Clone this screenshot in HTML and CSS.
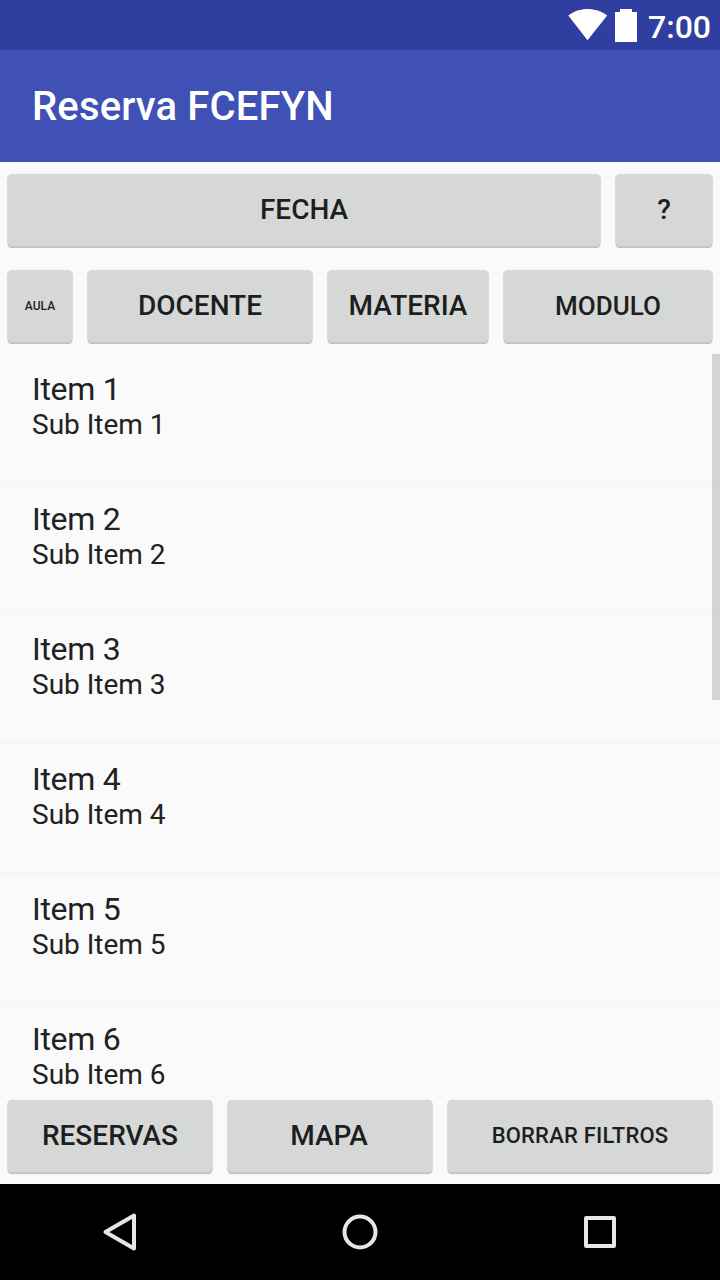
FILE: index.html
```html
<!DOCTYPE html>
<html lang="es">
<head>
<meta charset="utf-8">
<title>Reserva FCEFYN</title>
<link rel="stylesheet" href="styles.css">
</head>
<body>
<div class="screen">
  <div class="status-bar">
    <svg class="wifi" width="40" height="32" viewBox="0 0 40 32"><path d="M.3 6.6C6 2 12.5 0 19.5 0S33.500 2 39.200 6.600L19.500 31.300z" fill="#fff"/></svg>
    <svg class="battery" width="22" height="33" viewBox="0 0 22 33"><path d="M5 0h12v3h5v30H0V3h5z" fill="#fff"/></svg>
    <span class="clock">7:00</span>
  </div>
  <header class="app-bar"><h1 class="app-title">Reserva FCEFYN</h1></header>
  <main class="content">
    <div class="button-row date-row">
      <button class="button">FECHA</button>
      <button class="button">?</button>
    </div>
    <div class="button-row filter-row">
      <button class="button tiny">AULA</button>
      <button class="button">DOCENTE</button>
      <button class="button">MATERIA</button>
      <button class="button modulo">MODULO</button>
    </div>
    <div class="list">
      <div class="item"><div class="item-title">Item 1</div><div class="item-sub">Sub Item 1</div></div>
      <div class="item"><div class="item-title">Item 2</div><div class="item-sub">Sub Item 2</div></div>
      <div class="item"><div class="item-title">Item 3</div><div class="item-sub">Sub Item 3</div></div>
      <div class="item"><div class="item-title">Item 4</div><div class="item-sub">Sub Item 4</div></div>
      <div class="item"><div class="item-title">Item 5</div><div class="item-sub">Sub Item 5</div></div>
      <div class="item"><div class="item-title">Item 6</div><div class="item-sub">Sub Item 6</div></div>
      <div class="scrollbar"></div>
    </div>
    <div class="button-row action-row">
      <button class="button reservas">RESERVAS</button>
      <button class="button mapa">MAPA</button>
      <button class="button small">BORRAR FILTROS</button>
    </div>
  </main>
  <nav class="nav-bar">
    <svg width="48" height="48" viewBox="0 0 48 48"><path d="M38 7.500v33L9.500 24z" class="nav-stroke"/></svg>
    <svg width="48" height="48" viewBox="0 0 48 48"><circle cx="24" cy="24" r="15.500" class="nav-stroke"/></svg>
    <svg width="48" height="48" viewBox="0 0 48 48"><rect x="10" y="10" width="28" height="28" class="nav-stroke"/></svg>
  </nav>
</div>
</body>
</html>
```
FILE: styles.css
```css
* { box-sizing: border-box; }
body { margin: 0; font-family: Roboto, "Noto Sans", sans-serif; }
.screen {
  width: 720px;
  height: 1280px;
  display: flex;
  flex-direction: column;
  overflow: hidden;
  background: #fafafa;
  color: #212121;
}
.status-bar {
  height: 50px;
  flex: none;
  display: flex;
  align-items: flex-start;
  justify-content: flex-end;
  padding: 9px 9px 0 0;
  background: #303f9f;
  color: #fff;
}
.battery { margin: 0 11px 0 7px; }
.clock { font-size: 32px; line-height: 37px; font-weight: 500; }
.app-bar {
  height: 112px;
  flex: none;
  display: flex;
  align-items: center;
  padding: 2px 0 0 32px;
  background: #3f51b5;
}
.app-title {
  margin: 0;
  font-size: 40px;
  line-height: 48px;
  font-weight: 500;
  letter-spacing: 0.15px;
  color: #fff;
}
.content {
  flex: 1;
  min-height: 0;
  display: flex;
  flex-direction: column;
}
.button-row {
  display: grid;
  flex: none;
  height: 96px;
  padding: 12px 8px;
  column-gap: 16px;
}
.date-row { grid-template-columns: 592px 96px; }
.filter-row { grid-template-columns: 64px 224px 160px 208px; }
.action-row { grid-template-columns: 204px 204px 264px; }
.button {
  height: 72px;
  padding: 0;
  border: 0;
  border-radius: 4px;
  background: #d6d8d7;
  box-shadow: 0 2px 0 #c4c4c4, 0 1px 1px 1px #d8d8d8;
  color: #1d1e1e;
  font: 500 28px/34px Roboto, "Noto Sans", sans-serif;
  white-space: nowrap;
}
.tiny { font-size: 12px; }
.modulo { font-size: 26px; }
.mapa { padding-right: 2px; }
.small { font-size: 22px; letter-spacing: 0.2px; }
.list {
  position: relative;
  flex: 1;
  min-height: 0;
  overflow: hidden;
}
.item {
  height: 130px;
  padding: 17px 32px 0;
  border-bottom: 2px solid #f6f6f6;
}
.item-title { font-size: 32px; line-height: 36px; letter-spacing: -0.3px; }
.item-sub { margin-top: 5px; font-size: 28px; line-height: 26px; }
.scrollbar {
  position: absolute;
  top: 0;
  right: 0;
  width: 8px;
  height: 346px;
  background: rgba(0, 0, 0, 0.15);
}
.nav-bar {
  height: 96px;
  flex: none;
  display: flex;
  justify-content: center;
  align-items: center;
  gap: 192px;
  background: #000;
}
.nav-stroke { fill: none; stroke: #e6e6e6; stroke-width: 4; stroke-linejoin: round; }
```
